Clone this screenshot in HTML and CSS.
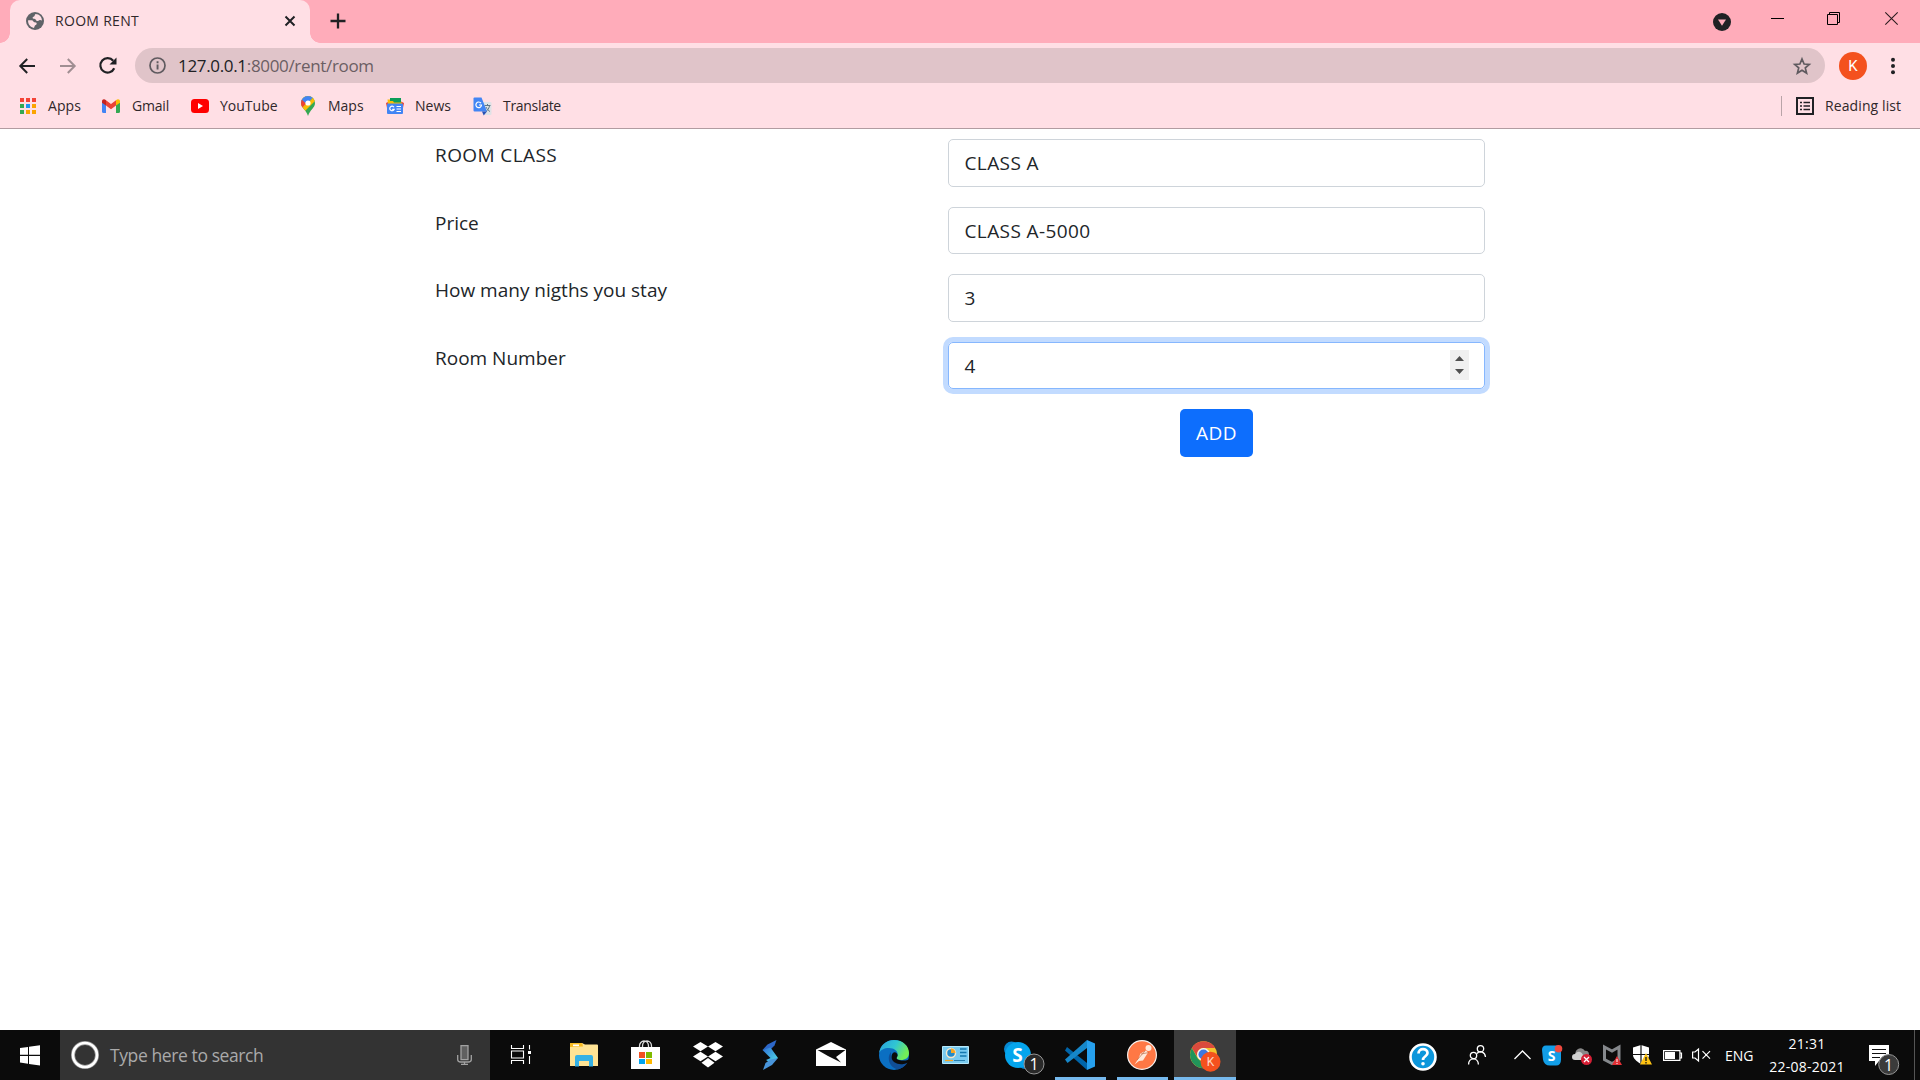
FILE: index.html
```html
<!DOCTYPE html>
<html lang="en">
<head>
<meta charset="utf-8">
<title>ROOM RENT</title>
<link rel="stylesheet" href="styles.css">
</head>
<body>
<div class="screen">
  <header class="browser">
    <div class="tab-strip">
      <div class="tab">
        <svg class="tab-favicon" width="18" height="18" viewBox="0 0 18 18"><circle cx="9" cy="9" r="9" fill="#5f6368"/><path d="M9.500 2C8.500 3 9 4 7.500 4.800 6 5.500 6.500 7 8 6.800c1.300-.2 1.500.8 2.300 1.700.8.900 2.300.5 3-.2.700-.6 1.500-.4 2.600.2C16 5 13.500 2 9.500 2zM2.100 8.200c-.3 4 2.200 7 5.900 7.700l.8-2.200c.4-1 1.800-.6 1.900-2 .1-1.700-1.700-1.200-2.500-1.500C7 9.700 7.500 8.300 5.500 8.200z" fill="#ffdfe5"/></svg>
        <span class="tab-title">ROOM RENT</span>
        <svg class="tab-close" width="12" height="12" viewBox="0 0 12 12"><path d="M1.500 1.500l9 9m0-9l-9 9" stroke="#202124" stroke-width="2" fill="none"/></svg>
      </div>
      <svg class="new-tab" width="16" height="16" viewBox="0 0 16 16"><path d="M8 .5v15M.5 8h15" stroke="#202124" stroke-width="2.300"/></svg>
      <div class="window-buttons">
        <svg class="tab-search" width="18" height="18" viewBox="0 0 18 18"><circle cx="9" cy="9" r="9" fill="#202124"/><path d="M5 6.500h8L9 12.800z" fill="#ffacba"/></svg>
        <svg class="minimize" width="13" height="13" viewBox="0 0 13 13"><path d="M0 6.500h13" stroke="#000"/></svg>
        <svg class="restore" width="13" height="13" viewBox="0 0 13 13"><path d="M.5 2.500h10v10H.5zM2.500 2V.5h10v10H11" fill="none" stroke="#000"/></svg>
        <svg class="close" width="13" height="13" viewBox="0 0 13 13"><path d="M.3.3l12.400 12.400m0-12.400L.3 12.700" stroke="#2b1c1f" stroke-width="1.100"/></svg>
      </div>
    </div>
    <div class="toolbar">
      <svg class="nav-back" width="16" height="16" viewBox="0 0 16 16"><path d="M16 8H1.500M8.200 1L1.300 8l6.900 7" fill="none" stroke="#202124" stroke-width="2"/></svg>
      <svg class="nav-forward" width="16" height="16" viewBox="0 0 16 16"><path d="M0 8h14.500M7.800 1l6.900 7-6.900 7" fill="none" stroke="#a08e92" stroke-width="2"/></svg>
      <svg class="nav-reload" width="18" height="17" viewBox="0 0 18 17"><path d="M15.200 11.200A7.200 7.200 0 1 1 14.200 3.800" fill="none" stroke="#202124" stroke-width="2.200"/><path d="M17.500.5v7h-7z" fill="#202124"/></svg>
      <div class="omnibox">
        <svg width="17" height="17" viewBox="0 0 17 17"><circle cx="8.500" cy="8.500" r="7.500" fill="none" stroke="#5f5a5f" stroke-width="1.700"/><path d="M7.600 7.500h1.900v5H7.600zM7.600 4.300h1.900v1.900H7.600z" fill="#5f5a5f"/></svg>
        <span class="url"><span class="host">127.0.0.1</span>:8000/rent/room</span>
        <svg class="bookmark-star" width="18" height="18" viewBox="0 0 18 18"><path d="M9 2l2.100 5 5.200.4-4 3.500 1.300 5.200L9 13.300l-4.600 2.800 1.300-5.200-4-3.500L6.900 7z" fill="none" stroke="#5f5a5f" stroke-width="1.700"/></svg>
      </div>
      <div class="avatar">K</div>
      <svg class="menu-dots" width="6" height="18" viewBox="0 0 6 18"><g fill="#202124"><circle cx="3" cy="2.700" r="2"/><circle cx="3" cy="9" r="2"/><circle cx="3" cy="15.300" r="2"/></g></svg>
    </div>
    <nav class="bookmarks">
      <div class="bookmark apps"><svg width="18" height="18" viewBox="0 0 18 18"><path d="M1 1h4v4H1zM7 1h4v4H7zM13 1h4v4h-4z" fill="#f44336"/><path d="M1 7h4v4H1zM1 13h4v4H1z" fill="#34a853"/><path d="M7 7h4v4H7z" fill="#2196f3"/><path d="M13 7h4v4h-4zM13 13h4v4h-4zM7 13h4v4H7z" fill="#fba400"/></svg><span>Apps</span></div>
      <div class="bookmark gmail"><svg width="18" height="18" viewBox="0 0 18 18"><path d="M0 5v9.500q0 1.500 1.500 1.500H4V7z" fill="#4285f4"/><path d="M14 7v9h2.500q1.500 0 1.500-1.500V5z" fill="#34a853"/><path d="M4 3.300l5 3.800 5-3.800v5.300l-5 3.700-5-3.700z" fill="#ea4335"/><path d="M0 4.500C0 2 2.500 1.800 4 3.300v5.300L0 5.800z" fill="#c5221f"/><path d="M18 4.500c0-2.500-2.500-2.700-4-1.200v5.300l4-2.800z" fill="#fbbc04"/></svg><span>Gmail</span></div>
      <div class="bookmark youtube"><svg width="18" height="18" viewBox="0 0 18 18"><rect y="2" width="18" height="14" rx="3.500" fill="#f00"/><path d="M7 6l5 3-5 3z" fill="#fff"/></svg><span>YouTube</span></div>
      <div class="bookmark maps"><svg width="14" height="20" viewBox="0 0 14 20"><clipPath id="pin"><path d="M7 0a7 7 0 0 1 7 7c0 5-5 6.500-7 13C5 13.500 0 12 0 7a7 7 0 0 1 7-7z"/></clipPath><g clip-path="url(#pin)"><path d="M0 0h14v20H0z" fill="#34a853"/><path d="M0 0h14L1.500 13H0z" fill="#fbbc04"/><path d="M0 14L14 0v5L4 15z" fill="#fbbc04"/><path d="M0 0h13L7 7H0z" fill="#4285f4"/><path d="M0 3l5 4.500L1 12H0z" fill="#ea4335"/></g><circle cx="7" cy="7" r="2.600" fill="#fff"/></svg><span>Maps</span></div>
      <div class="bookmark news"><svg width="18" height="18" viewBox="0 0 18 18"><path d="M0 6l3-1.500L4 15l-2 1z" fill="#ea4335"/><path d="M18 6l-3-1.500L14 15l2 1z" fill="#ea4335"/><path d="M1.500 2.500h5V7H2z" fill="#fbbc04"/><path d="M4 1h11v6H4z" fill="#0c9d58"/><path d="M2 4h5l1 1.500h8V8H2z" fill="#fbbc04"/><rect x="1" y="6.500" width="16" height="10.500" rx="1" fill="#4285f4"/><path d="M8 10.200a2.300 2.300 0 1 0 .2 2.100H6.200M10.500 9.500h4.500M10.500 12h4.500M10.500 14.500h4.500" fill="none" stroke="#fff" stroke-width="1.200"/></svg><span>News</span></div>
      <div class="bookmark translate"><svg width="19" height="19" viewBox="0 0 19 19"><path d="M8 5h9.500q1 0 1 1v11q0 1-1 1H12z" fill="#dfe2e6"/><path d="M11.500 8.500h6M14.500 7v2m2 0c-.8 3-2 4.500-3.500 5.500m0-4.500c1 2 2 3.500 4 4.500" fill="none" stroke="#607988"/><path d="M1.500.5h7l5.500 14H1.500q-1 0-1-1v-12q0-1 1-1z" fill="#4285f4"/><path d="M9 14.500h5l-3.300 4z" fill="#2852b5"/><path d="M8 6.200A2.800 2.800 0 1 0 8.500 8H6" fill="none" stroke="#fff" stroke-width="1.200"/></svg><span>Translate</span></div>
      <div class="reading-list"><svg width="18" height="18" viewBox="0 0 18 18"><path d="M1 1h16v16H1z" fill="none" stroke="#202124" stroke-width="2"/><path d="M4 5.500h2M7.500 5.500H14M4 9h2m1.500 0H14M4 12.500h2m1.500 0H14" stroke="#202124" stroke-width="1.600"/></svg><span>Reading list</span></div>
    </nav>
  </header>

  <main class="page">
    <form class="room-form">
      <label class="caps">ROOM CLASS</label><div class="control caps">CLASS A</div>
      <label>Price</label><div class="control caps">CLASS A-5000</div>
      <label>How many nigths you stay</label><div class="control">3</div>
      <label>Room Number</label>
      <div class="control focused"><span>4</span><svg class="spinner" width="19" height="30" viewBox="0 0 19 30"><path d="M0 0h19v30H0z" fill="#f0f0f0"/><path d="M5 11h9L9.500 6zM5 19h9l-4.500 5z" fill="#505050"/></svg></div>
      <button class="add caps" type="button">ADD</button>
    </form>
  </main>

  <footer class="taskbar">
    <div class="start"><svg width="20" height="21" viewBox="0 0 20 21"><path d="M0 3l8-1.100V9.700H0zM9 1.800L20 .2v9.500H9zM0 10.900h8v7.800l-8-1.100zM9 10.900h11v9.700L9 19z" fill="#fff"/></svg></div>
    <div class="search">
      <svg width="28" height="28" viewBox="0 0 28 28"><circle cx="14" cy="14" r="12" fill="none" stroke="#929292" stroke-width="4"/><circle cx="14" cy="14" r="12" fill="none" stroke="#fff" stroke-width="2.600"/></svg>
      <span>Type here to search</span>
      <svg class="mic" width="15" height="20" viewBox="0 0 15 20"><path d="M4 .7h7v14H4z" fill="#606060" stroke="#a2a2a2" stroke-width="1.300"/><path d="M.7 10v4.500q0 2.500 3 2.500h7.600q3 0 3-2.500V10M7.500 17v2M4 19.300h7" fill="none" stroke="#a2a2a2" stroke-width="1.300"/></svg>
    </div>
    <div class="apps-row">
      <div class="app"><svg viewBox="0 0 30 30"><path d="M5.500 5v3.500h12V5M5.500 24v-3.500h12V24M5.500 11h12v7h-12zM23.500 5v4.500M23.500 16v8" fill="none" stroke="#fff" stroke-width="1.100"/><path d="M22 11h3v3h-3z" fill="#fff"/></svg></div>
      <div class="app"><svg viewBox="0 0 30 30"><path d="M2 4q0-1 1-1h11l3 1.500h12q1 0 1 1V26H2z" fill="#ffe394"/><path d="M2 7V4q0-1 1-1h10q1 0 1.500 1L15 6.500z" fill="#f9bb20"/><path d="M5 4.500h6v1.700H5z" fill="#fff"/><path d="M7 26.500V17q0-2 2-2h14q2 0 2 2v9.500h-4V21H11v5.500z" fill="#35b1e5"/></svg></div>
      <div class="app"><svg viewBox="0 0 30 30"><path d="M9.500 8V6a4.500 5 0 0 1 9 0v2M12.500 8V6a4.500 5 0 0 1 9 0v2" fill="none" stroke="#ddd" stroke-width="1.300"/><path d="M1 7h29v22H1z" fill="#fff"/><path d="M9 12h6v6H9z" fill="#f25022"/><path d="M16 12h6v6h-6z" fill="#7fba00"/><path d="M9 19h6v5H9z" fill="#00a4ef"/><path d="M16 19h6v5h-6z" fill="#ffb900"/></svg></div>
      <div class="app"><svg viewBox="0 0 30 30"><path d="M8.500 2l7.500 4.500-7.500 4.800L1 6.500zM23.500 2L31 6.500l-7.500 4.800L16 6.500zM8.500 11.700L16 16.400l-7.500 4.800L1 16.400zM23.500 11.700l7.500 4.700-7.500 4.800-7.500-4.800zM16 18l6.500 4.700L16 27.500l-6.500-4.800z" fill="#fff"/></svg></div>
      <div class="app"><svg viewBox="0 0 30 30"><defs><linearGradient id="bolt" x1="0" y1="0" x2="1" y2="1"><stop stop-color="#2f6fd6"/><stop offset="1" stop-color="#52e0e8"/></linearGradient></defs><path d="M22.500 0l-2 5.500L17 9 8.500 10l5-5.500z" fill="#2d67c8"/><path d="M8.500 10l8-2.500L24 18l-8.500 4.500L12 20l4.500-2z" fill="url(#bolt)"/><path d="M24 18l-6 7-9 5 2.500-7 5-3.500z" fill="#4995da"/></svg></div>
      <div class="app"><svg viewBox="0 0 30 30"><path d="M0 9.500L15 2l15 7.500V26H0z" fill="#fff"/><path d="M1.500 10h28l-9.500 7 5 5.500L12 16z" fill="#0d0d0d"/></svg></div>
      <div class="app"><svg viewBox="0 0 30 30"><defs><linearGradient id="wave" x1="0" y1="0" x2="1" y2=".4"><stop stop-color="#289fe0"/><stop offset=".55" stop-color="#30c6d3"/><stop offset="1" stop-color="#73ed57"/></linearGradient></defs><circle cx="15" cy="15" r="15" fill="#0b6fc2"/><path d="M.2 13C1 5.500 7 0 15 0c9 0 15 6 15 13 0 5-4 7-8 7-3 0-4.500-1-4.500-2 0-1 1.200-1.500 1.200-4C18.700 11 15 8 10 8 5 8 1.500 10 .2 13z" fill="url(#wave)"/><path d="M12 12c-5 6-1 16 7 17.500C24 28 27.500 25 28.500 22c-7 4-16 1-16.500-6z" fill="#104e96"/><path d="M17.500 13c-2-2-5 0-5 4 0 5 6 8 12 7 4-.5 7-3 7.500-6-3 3-8 3-12 2-2-.5-3-1.500-2-3 1-1 .8-2.500-.5-4z" fill="#0b0b0b"/></svg></div>
      <div class="app"><svg viewBox="0 0 30 30"><path d="M1.500 6.500h26v17h-26z" fill="#79caef" stroke="#b7e9fb"/><circle cx="10" cy="13" r="4.500" fill="#238ac9" stroke="#f5e7ca" stroke-width="1.500"/><path d="M10 13V8.500a4.500 4.500 0 0 1 4.500 4.500z" fill="#f5a623"/><path d="M19 9h6.500M19 12.500h6.500M19 16h6.500" stroke="#1578af" stroke-width="1.500"/><path d="M4 20.500h8" stroke="#f5a623" stroke-width="1.300"/><path d="M13 20.500h11" stroke="#277eae"/></svg></div>
      <div class="app"><svg viewBox="0 0 30 30"><circle cx="8.500" cy="9" r="7.500" fill="#0788d1"/><circle cx="22" cy="22" r="7" fill="#008bd8"/><circle cx="15" cy="15" r="13" fill="#05a5ed"/><text x="14.500" y="22" class="skype-letter">S</text><circle cx="31" cy="24" r="10" fill="#292929" stroke="#969696"/><text x="31" y="30" class="badge-text">1</text></svg></div>
      <div class="app running"><svg viewBox="0 0 30 30"><path d="M2 7l20 16v7L0 10.500z" fill="#0065a9"/><path d="M22 0v8L2.500 23 0 19.500z" fill="#1687c9"/><path d="M22 0l8 3.500v23L22 30z" fill="#26a0ee"/></svg></div>
      <div class="app running"><svg viewBox="0 0 30 30"><circle cx="15" cy="15" r="14.400" fill="#ff7845" stroke="#f4f1ef" stroke-width="1.200"/><circle cx="21.500" cy="8" r="3" fill="#ffe8d9"/><path d="M19 10.500l2 2-5 8-4 .5-4.500 3.500 4-6 2-5z" fill="#ffe8d9"/><path d="M14 14l8-1.500M10 20l8-9" stroke="#bf6e49" stroke-width=".7"/></svg></div>
      <div class="app running active"><svg viewBox="0 0 30 30"><circle cx="14.500" cy="14.700" r="13.500" fill="#f5c32c"/><path d="M2.800 8A13.500 13.500 0 0 1 26.200 8H14.500a6.500 6.500 0 0 0-6 9z" fill="#da4a3d"/><path d="M2.800 8l6 10.500a6.500 6.500 0 0 0 8.700 2l-3 7.700A13.500 13.500 0 0 1 2.800 8z" fill="#21945a"/><circle cx="14.500" cy="14.500" r="6.500" fill="#f5f5f5"/><circle cx="14.500" cy="14.500" r="5" fill="#3d78df"/><circle cx="21.500" cy="21.700" r="10" fill="#f4511e"/><text x="21.500" y="26" class="profile-letter">K</text></svg></div>
    </div>
    <div class="tray">
      <svg class="help" width="28" height="28" viewBox="0 0 28 28"><circle cx="14" cy="14" r="12.500" fill="#0c96db" stroke="#fff" stroke-width="2.600"/><path d="M9.500 10.500c0-6 9-5.500 9-.5 0 3.500-4.500 3-4.500 7" fill="none" stroke="#fff" stroke-width="2.700"/><circle cx="14" cy="20.700" r="1.800" fill="#fff"/></svg>
      <svg class="people" width="18" height="20" viewBox="0 0 18 20"><g fill="none" stroke="#fff" stroke-width="1.300"><circle cx="5.500" cy="10.500" r="3.200"/><path d="M.6 19.500c0-7.500 9.500-7.500 9.800 0"/><circle cx="12.500" cy="3.800" r="3.200"/><path d="M9 8.500c3-3.500 8-1.500 8.500 3.500"/></g></svg>
      <svg class="chevron" width="17" height="10" viewBox="0 0 17 10"><path d="M.5 9l8-8 8 8" fill="none" stroke="#fff" stroke-width="1.300"/></svg>
      <svg class="tray-skype" width="20" height="21" viewBox="0 0 20 21"><path d="M4 .5h10q5 0 5 5v9q0 6-5 6H8q-6 0-7-6L0 5q0-4.500 4-4.500z" fill="#129ee7"/><text x="9.500" y="15.500" class="tray-letter">S</text><circle cx="16.500" cy="3.800" r="3.800" fill="#ef493f"/></svg>
      <svg class="cloud" width="20" height="18" viewBox="0 0 20 18"><path d="M4 8a5 5 0 0 1 9-5c4-1 5 4 3 7H4z" fill="#888"/><path d="M3 12a3 3 0 0 1 0-6c3-4 7-2 8 1l4 5z" fill="#d0d0d0"/><circle cx="14.500" cy="11.500" r="5.500" fill="#d61f35"/><path d="M12 9l5 5m0-5l-5 5" stroke="#fff" stroke-width="1.300"/></svg>
      <svg class="mcafee" width="19" height="20" viewBox="0 0 19 20"><path d="M1.500 2L9 6l7-4v12.500l-7 4-7.500-4z" fill="none" stroke="#85888c" stroke-width="3"/><path d="M14 11l5 9H9z" fill="#e32f35"/><path d="M14 14v3m0 1v1" stroke="#fff"/></svg>
      <svg class="shield" width="20" height="20" viewBox="0 0 20 20"><path d="M9 0l8 2.500V10c0 4-4 7-8 9-5-3-8-6-8-9V2.500z" fill="#fff"/><path d="M9 0v19M1 9.500h16" stroke="#101010" stroke-width="1.200"/><path d="M14 8l6 11.500H8z" fill="#ffc313"/><path d="M14 12v4m0 1v1.500" stroke="#181818" stroke-width="1.300"/></svg>
      <svg class="battery" width="19" height="11" viewBox="0 0 19 11"><path d="M.6.6h16.300v9.800H.6zM17 3h1.500v5H17" fill="none" stroke="#fff" stroke-width="1.200"/><path d="M2 2h10v7H2z" fill="#fff"/></svg>
      <svg class="speaker" width="19" height="14" viewBox="0 0 19 14"><path d="M.6 4H3l3.500-3v12L3 10H.6zM10.500 3.200l7.500 7.500m0-7.500l-7.500 7.500" fill="none" stroke="#fff" stroke-width="1.200"/></svg>
      <span class="lang">ENG</span>
      <div class="clock"><span class="time">21:31</span><span class="date">22-08-2021</span></div>
      <svg class="action-center" width="31" height="31" viewBox="0 0 31 31"><path d="M0 0h20v16H10l-4 5v-5H0z" fill="#fff"/><path d="M3 4.500h14M3 8.500h14M3 12.500h8" stroke="#111" stroke-width="1.200"/><circle cx="19.700" cy="19.500" r="10" fill="#3b3b3b" stroke="#969696"/><text x="19.700" y="25.500" class="badge-text">1</text></svg>
      <div class="show-desktop"></div>
    </div>
  </footer>
</div>
</body>
</html>
```
FILE: styles.css
```css
* { box-sizing: border-box; }
body { margin: 0; font-family: "Open Sans", "Noto Sans", sans-serif; background: #fff; }
svg { display: block; flex: none; overflow: visible; }
span, label { white-space: nowrap; }
.screen { width: 1920px; height: 1080px; display: flex; flex-direction: column; overflow: hidden; }

/* Browser frame */
.browser { height: 129px; background: #ffdfe5; border-bottom: 1px solid #b29ca1; flex: none; }
.tab-strip { height: 43px; background: #ffacba; display: flex; align-items: flex-start; padding-left: 10px; }
.tab { position: relative; width: 300px; height: 43px; background: #ffdfe5; border-radius: 10px 10px 0 0; display: flex; align-items: flex-start; padding-left: 16px; }
.tab::before, .tab::after { content: ""; position: absolute; bottom: 0; width: 10px; height: 10px; }
.tab::before { left: -10px; background: radial-gradient(circle at 0 0, #ffacba 9.5px, #ffdfe5 10px); }
.tab::after { right: -10px; background: radial-gradient(circle at 100% 0, #ffacba 9.5px, #ffdfe5 10px); }
.tab-favicon { margin-top: 12px; }
.tab-title { margin: 10px 0 0 11px; width: 229px; font-size: 14px; line-height: 21px; color: #30272a; letter-spacing: .3px; }
.tab-close { margin-top: 15px; }
.new-tab { margin: 13px 0 0 19.5px; }
.window-buttons { margin-left: auto; display: flex; }
.tab-search { margin: 13px 40px 0 0; }
.minimize { margin: 12px 43px 0 0; }
.restore { margin: 12px 45px 0 0; }
.close { margin: 12px 22px 0 0; }
.toolbar { height: 45px; display: flex; align-items: center; padding: 0 17px 0 19px; }
.nav-forward { margin-left: 25px; }
.nav-reload { margin-left: 23px; }
.omnibox { margin-left: 18px; width: 1690px; height: 35px; border-radius: 18px; background: #e0c4c9; display: flex; align-items: center; padding: 0 14px; }
.url { margin-left: 12px; font-size: 17px; line-height: 24px; color: #6b5e63; letter-spacing: -.33px; }
.host { color: #202124; }
.bookmark-star { margin-left: auto; }
.avatar { margin-left: 14px; width: 28px; height: 28px; border-radius: 50%; background: #f4511e; color: #fff; font: 15px/28px Roboto, sans-serif; text-align: center; }
.menu-dots { margin-left: auto; margin-right: 7.5px; }
.bookmarks { height: 36px; display: flex; align-items: center; padding-left: 19px; font-size: 14px; line-height: 20px; color: #30272a; }
.bookmark { display: flex; align-items: center; height: 36px; gap: 11px; }
.apps { width: 83px; letter-spacing: .1px; }
.gmail { width: 89px; gap: 12px; letter-spacing: -.2px; }
.youtube { width: 110px; }
.maps { width: 85px; gap: 13px; }
.news { width: 87px; }
.translate { width: 110px; letter-spacing: -.3px; }
.reading-list { margin-left: auto; padding-left: 14px; margin-right: 18px; width: 121px; height: 20px; border-left: 1px solid #b9a4a8; display: flex; align-items: center; gap: 11px; letter-spacing: .1px; }

/* Room booking form */
.page { flex: 1; min-height: 0; padding-top: 10px; }
.room-form { width: 1050px; margin-left: 435px; display: grid; grid-template-columns: 513px 537px; grid-auto-rows: 47.5px; row-gap: 20px; color: #212529; font-size: 19px; line-height: 30px; letter-spacing: 0; }
.room-form label { padding-top: 1px; }
.control { border: 1px solid #ced4da; border-radius: 5px; padding: 9px 15px 8px 15.5px; display: flex; justify-content: space-between; align-items: center; white-space: nowrap; }
.room-form .caps { letter-spacing: .4px; }
.focused { border-color: #86b7fe; box-shadow: 0 0 0 5px #c2dbff; }
.spinner { margin-top: -1px; }
.add { grid-column: 2; justify-self: center; width: 73px; border: 0; border-radius: 5px; background: #0d6efd; color: #fff; font: inherit; padding: 1px 0 0; }

/* Desktop taskbar */
.taskbar { height: 50px; flex: none; display: flex; background: #0b0b0b; color: #fff; }
.start { width: 60px; display: grid; place-items: center; }
.search { width: 430px; background: #333; display: flex; align-items: center; padding: 0 18px 0 11px; color: #aaa; font-size: 17.5px; }
.search span { margin-left: 11px; letter-spacing: -.4px; }
.mic { margin-left: auto; }
.apps-row { width: 746px; display: grid; grid-template-columns: repeat(12, 1fr); }
.app { display: grid; place-items: center; position: relative; padding-right: 1px; }
.app svg { width: 30px; height: 30px; }
.running::after { content: ""; position: absolute; left: 5px; right: 6px; bottom: 0; height: 3px; background: #76b9ed; }
.active { background: #3c3c3c; }
.active::after { left: 0; right: 0; }
.skype-letter, .tray-letter, .profile-letter, .badge-text { text-anchor: middle; fill: #fff; font-family: "Open Sans", sans-serif; }
.skype-letter { font-size: 19px; font-weight: 700; }
.tray-letter { font-size: 14px; font-weight: 700; }
.profile-letter { font: 12px Roboto, sans-serif; fill: #ffd6c5; }
.badge-text { font-size: 16px; }
.tray { flex: 1; display: flex; align-items: center; padding-left: 173px; }
.help { margin-top: 3px; }
.people { margin-left: 31px; }
.chevron { margin-left: 28px; }
.tray-skype { margin-left: 11px; }
.cloud { margin-left: 10px; margin-top: 3px; }
.mcafee { margin-left: 11px; }
.shield { margin-left: 10px; }
.battery { margin-left: 11px; }
.speaker { margin-left: 10px; }
.lang { width: 30px; margin-left: 14px; font-size: 14px; letter-spacing: 0; }
.clock { width: 78px; margin-left: 13px; height: 50px; display: flex; flex-direction: column; align-items: center; font-size: 14px; line-height: 23px; padding-top: 2px; letter-spacing: .25px; }
.action-center { margin: 10px 0 0 23px; }
.show-desktop { height: 50px; width: 6px; margin-left: auto; border-left: 1px solid #555; }
```
